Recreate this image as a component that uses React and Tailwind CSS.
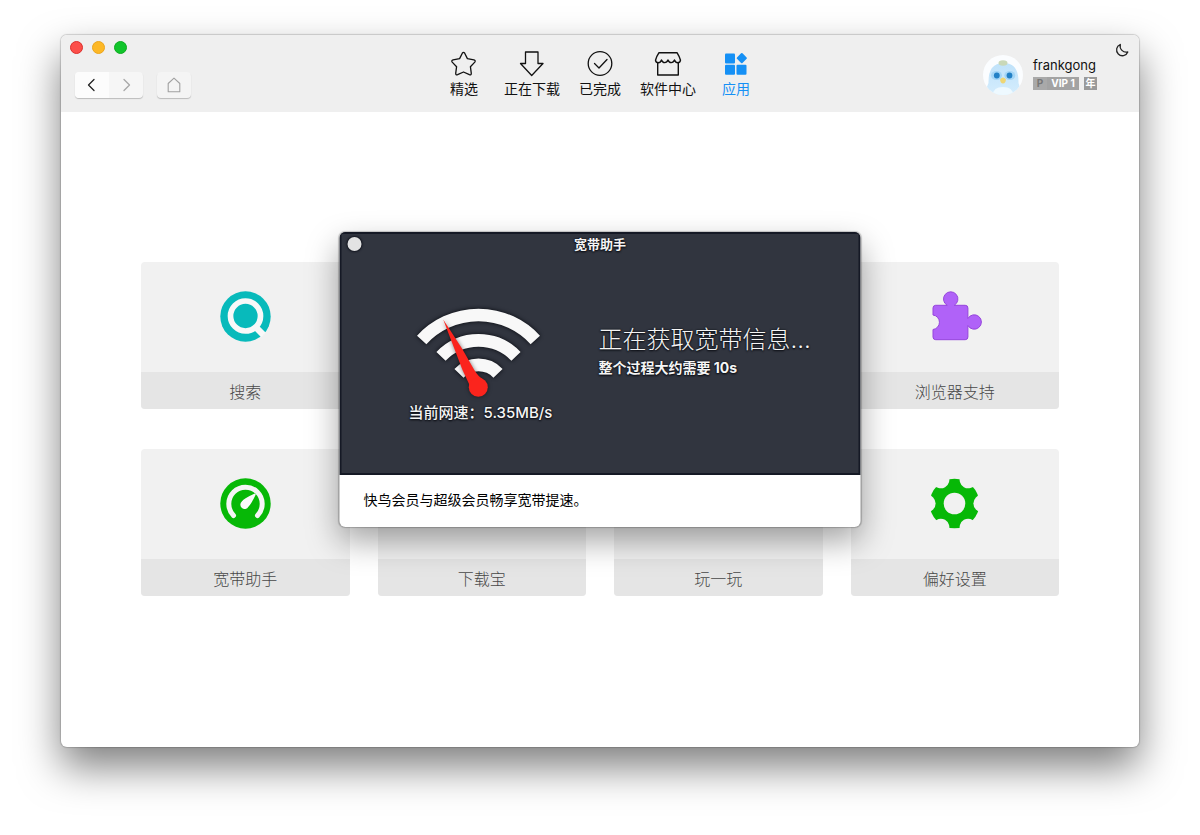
import React from "react";

const line = { fill: "none", stroke: "currentColor", strokeWidth: 1.3, strokeLinejoin: "round", strokeLinecap: "round" };

function StarIcon() {
  return (
    <svg viewBox="0 0 28 28" className="size-7" {...line}>
      <path d="M12.300 3.200q1.200-1.800 2.400 0l2.700 5.400 6.500 1.300q2 .6.900 2.200l-4.400 4.600.9 6.600q0 2-1.900 1.400L13.500 22l-5.900 2.700q-1.900.600-1.900-1.400l.9-6.600-4.400-4.600q-1.100-1.600.9-2.200l6.500-1.300z" />
    </svg>
  );
}

function DownloadIcon() {
  return (
    <svg viewBox="0 0 28 28" className="size-7" {...line}>
      <path d="M7.500 2h12.500v11.500h5L13.700 25.500 2.500 13.500h5z" />
    </svg>
  );
}

function DoneIcon() {
  return (
    <svg viewBox="0 0 28 28" className="size-7" {...line}>
      <circle cx="14" cy="13.500" r="11.800" />
      <path d="M8.500 13.500l4.500 4.500 8-8.500" />
    </svg>
  );
}

function StoreIcon() {
  return (
    <svg viewBox="0 0 28 28" className="size-7" {...line} strokeWidth="1.4">
      <path d="M5 2.700h18q2.500 4 3.500 7.500-.5 2.600-2.700 2.600T20.500 10q-1 2.600-3.300 2.600T14 10q-1 2.600-3.300 2.600T7.500 10q-1 2.800-3.300 2.800T1.500 10.200Q2.500 6.500 5 2.700z" />
      <path d="M3.700 13v12h20.600V13" />
    </svg>
  );
}

function AppsIcon() {
  return (
    <svg viewBox="0 0 28 28" className="size-7" fill="currentColor">
      <rect x="3" y="3.500" width="10" height="10" rx="1" />
      <rect x="3" y="14.700" width="10" height="10" rx="1" />
      <rect x="14.500" y="14.700" width="10" height="10" rx="1" />
      <rect x="15.900" y="4.200" width="7.800" height="7.800" rx="1" transform="rotate(45 19.800 8.100)" />
    </svg>
  );
}

function SearchIcon() {
  return (
    <svg viewBox="0 0 51 51" className="size-[51px]">
      <circle cx="25.500" cy="25.500" r="25.200" fill="#08babb" />
      <circle cx="25.500" cy="25" r="15" fill="none" stroke="#f8f8f8" strokeWidth="5.700" />
      <path d="M35.500 36l8 8" stroke="#f8f8f8" strokeWidth="6.500" />
    </svg>
  );
}

function GaugeIcon() {
  return (
    <svg viewBox="0 0 51 51" className="size-[51px]">
      <circle cx="25.500" cy="25.500" r="25.200" fill="#07b807" />
      <path d="M13.500 37.500a16.700 16.700 0 1 1 24 0" fill="none" stroke="#f5f5f5" strokeWidth="5" strokeLinecap="round" />
      <path d="M21.800 23.500Q24 20.500 34.800 15.600l1 1Q31 26.500 28.400 28.800a4.300 4.300 0 1 1-6.600-5.300z" fill="#fafafa" />
    </svg>
  );
}

function PuzzleIcon() {
  return (
    <svg viewBox="0 0 51 51" className="size-[51px] overflow-visible">
      <path
        d="M6.500 14.300h11.700a7.200 7.200 0 1 1 7 0h11a2.700 2.700 0 0 1 2.700 2.700v10.500a7.200 7.200 0 1 1 0 7V46a2.700 2.700 0 0 1-2.700 2.700H6.700A2.700 2.700 0 0 1 4 46v-7.500a7.300 7.300 0 0 0 0-14.500v-7A2.700 2.700 0 0 1 6.500 14.300z"
        fill="#b062f8"
        stroke="#9544dc"
        strokeWidth="1"
      />
    </svg>
  );
}

const notches = [0, 60, 120, 180, 240, 300];

function GearIcon() {
  return (
    <svg viewBox="0 0 51 51" className="size-[51px]">
      <mask id="gear">
        <circle cx="25.500" cy="25.500" r="24.800" fill="white" />
        <circle cx="25.500" cy="25.500" r="10.800" fill="black" />
        {notches.map((a) => (
          <circle key={a} cx="53" cy="25.500" r="8.600" fill="black" transform={`rotate(${a} 25.500 25.500)`} />
        ))}
      </mask>
      <rect width="51" height="51" fill="#07b807" mask="url(#gear)" />
    </svg>
  );
}

function SpeedIcon() {
  return (
    <svg viewBox="-2 0 136 100" className="h-[100px] w-[136px] overflow-visible">
      <path
        className="drop-shadow-[0_0_2px_#05070d]"
        d="M11.200 40A77 77 0 0 1 124.800 40M30.500 56.300a52 52 0 0 1 75 0M48.500 73.300a27 27 0 0 1 39 0"
        fill="none"
        strokeWidth="12.700"
        stroke="#f8f8f8"
      />
      <g fill="#fb241d" className="drop-shadow-[0_0_2px_rgba(0,0,0,0.5)]">
        <path d="M32.700 19.500L51.500 48.500 63.500 69.500Q67.500 76.500 73 79.500L59.500 86 52 70z" />
        <circle cx="67.800" cy="87.300" r="9.500" />
      </g>
    </svg>
  );
}

function Avatar() {
  return (
    <svg viewBox="0 0 40 40" className="size-10" role="img" aria-label="frankgong">
      <defs>
        <clipPath id="face"><circle cx="20" cy="20" r="20" /></clipPath>
        <linearGradient id="bird" x2="0" y2="1">
          <stop stopColor="#bfe2fa" />
          <stop offset="1" stopColor="#d5edfd" />
        </linearGradient>
      </defs>
      <g clipPath="url(#face)">
        <rect width="40" height="40" fill="#fbfdff" />
        <path d="M5 40Q2 35 5.500 28 5 8 20.500 8T35.500 28q3 7 0 12z" fill="url(#bird)" />
        <path d="M10 40q0-8 10-8t10 8z" fill="#eef9ff" />
        <ellipse cx="20" cy="8" rx="4.500" ry="2.800" fill="#c9d8b8" />
        <ellipse cx="13.500" cy="20.500" rx="5.500" ry="4.500" fill="#a5d6f6" />
        <ellipse cx="26.800" cy="20.500" rx="5.500" ry="4.500" fill="#a5d6f6" />
        <circle cx="13.800" cy="20.500" r="2.900" fill="#2381c6" />
        <circle cx="26.500" cy="20.500" r="2.900" fill="#2381c6" />
        <path d="M17 24.500q3-4 6 0-.5 4-3 4t-3-4z" fill="#eed675" />
      </g>
    </svg>
  );
}

const tabs = [
  { label: "精选", Icon: StarIcon },
  { label: "正在下载", Icon: DownloadIcon },
  { label: "已完成", Icon: DoneIcon },
  { label: "软件中心", Icon: StoreIcon },
  { label: "应用", Icon: AppsIcon, active: true },
];

const cards = [
  { label: "搜索", Icon: SearchIcon, place: "col-start-1" },
  { label: "浏览器支持", Icon: PuzzleIcon, place: "col-start-4" },
  { label: "宽带助手", Icon: GaugeIcon, place: "col-start-1" },
  { label: "下载宝", place: "col-start-2" },
  { label: "玩一玩", place: "col-start-3" },
  { label: "偏好设置", Icon: GearIcon, place: "col-start-4" },
];

function Toolbar() {
  const key = "flex h-[26px] items-center justify-center";
  return (
    <header className="grid min-h-[77px] grid-cols-[1fr_auto_1fr] rounded-t-md bg-[#efefef]">
      <div className="flex flex-col gap-[18px] pt-1.5">
        <div className="flex gap-[9px] pl-[9px]">
          <button aria-label="Close" className="size-[13px] rounded-full border border-[#dc2f2c] bg-[#fc4f4a]" />
          <button aria-label="Minimize" className="size-[13px] rounded-full border border-[#eba51d] bg-[#fdb826]" />
          <button aria-label="Zoom" className="size-[13px] rounded-full border border-[#0eab20] bg-[#11c52b]" />
        </div>
        <div className="flex gap-3.5 pl-3.5">
          <div className="flex overflow-hidden rounded bg-[#f6f6f6] shadow-[0_1px_1px_rgba(0,0,0,0.22)]">
            <button aria-label="Back" className={`${key} w-[34px] bg-[#fcfcfc] text-[#222]`}>
              <svg viewBox="0 0 14 14" className="size-3.5" {...line}><path d="M9 1.500L3.500 7 9 12.500" /></svg>
            </button>
            <button aria-label="Forward" className={`${key} w-[34px] text-[#a8a8a8]`}>
              <svg viewBox="0 0 14 14" className="size-3.5" {...line}><path d="M5 1.500L10.500 7 5 12.500" /></svg>
            </button>
          </div>
          <button aria-label="Home" className={`${key} w-[34px] rounded bg-[#f4f4f4] text-[#a0a0a0] shadow-[0_1px_1px_rgba(0,0,0,0.22)]`}>
            <svg viewBox="0 0 16 16" className="size-4" {...line} strokeWidth="1.1"><path d="M2.200 6.500L8 1.200l5.800 5.300v8.300H2.200z" /></svg>
          </button>
        </div>
      </div>
      <nav className="flex pt-[15px]">
        {tabs.map(({ label, Icon, active }) => (
          <button key={label} className={`flex w-[68px] flex-col items-center gap-px text-sm leading-5 ${active ? "text-[#1590f5]" : "text-[#111]"}`}>
            <Icon />
            <span>{label}</span>
          </button>
        ))}
      </nav>
      <div className="flex items-start justify-end pt-2 pr-2.5">
        <div className="flex gap-2.5 pt-3">
          <Avatar />
          <div className="flex flex-col gap-0.5">
            <span className="text-[13px] leading-5 text-[#111]">frankgong</span>
            <div className="flex gap-[5px] text-[10px] leading-[13px] font-bold text-white">
              <span className="flex bg-[#a3a3a3]">
                <span className="w-3.5 bg-[#a9a9a9] text-center text-[#777]">P</span>
                <span className="w-8 text-center">VIP 1</span>
              </span>
              <span className="w-[13px] bg-[#9a9a9a] text-center">年</span>
            </div>
          </div>
        </div>
        <button aria-label="Dark mode" className="ml-[18px] text-[#222]">
          <svg viewBox="0 0 14 14" className="size-3.5" {...line}><path d="M5.300 1.500A5.800 5.800 0 1 0 12.800 9 6.200 6.200 0 0 1 5.300 1.500z" /></svg>
        </button>
      </div>
    </header>
  );
}

function Card({ label, Icon, place }) {
  return (
    <button className={`${place} overflow-hidden rounded bg-[#f1f1f1] text-base text-[#484848]`}>
      <span className="flex h-[110px] items-center justify-center">{Icon && <Icon />}</span>
      <span className="flex h-[37px] items-center justify-center bg-[#e5e5e5] pt-1 font-light">{label}</span>
    </button>
  );
}

function SpeedDialog() {
  return (
    <section
      role="dialog"
      aria-labelledby="dialog-title"
      className="absolute top-[197px] left-1/2 w-[521px] -translate-x-1/2 overflow-hidden rounded-md bg-white shadow-[0_0_1px_1px_rgba(0,0,0,0.2),0_14px_32px_rgba(0,0,0,0.36)]"
    >
      <div className="flex min-h-[243px] flex-col border-2 border-[#151925] bg-[#31353f] text-[#f5f5f5] [text-shadow:0_0_2px_#080a10,0_1px_2px_#080a10]">
        <div className="grid grid-cols-[1fr_auto_1fr] items-center px-1.5">
          <button aria-label="Close dialog" className="size-3.5 rounded-full bg-[#e3e3e3] shadow-[0_0_2px_1px_#12151e]" />
          <h2 id="dialog-title" className="text-[13px] leading-5 font-bold">宽带助手</h2>
        </div>
        <div className="flex pt-[46px] pl-[67px]">
          <div className="w-[154px]">
            <SpeedIcon />
            <p className="pt-px text-[15px] leading-6 font-medium whitespace-nowrap">当前网速：5.35MB/s</p>
          </div>
          <div className="pt-6 pl-9">
            <p className="text-2xl leading-8 font-light">正在获取宽带信息...</p>
            <p className="text-sm leading-6 font-bold">整个过程大约需要 10s</p>
          </div>
        </div>
      </div>
      <p className="px-6 pt-[15px] pb-[17px] text-sm leading-5 text-black">快鸟会员与超级会员畅享宽带提速。</p>
    </section>
  );
}

export default function App() {
  return (
    <div className="flex min-h-screen flex-col bg-white px-[61px] pt-[35px] pb-[88px] font-['Inter','Noto_Sans_CJK_SC',sans-serif]">
      <div className="relative flex grow flex-col rounded-md bg-white shadow-[0_0_1px_1px_rgba(0,0,0,0.16),0_20px_40px_rgba(0,0,0,0.5)]">
        <Toolbar />
        <main className="flex grow flex-col justify-center px-20 pb-0.5">
          <div className="grid grid-cols-4 gap-x-7 gap-y-10">
            {cards.map((card) => (
              <Card key={card.label} {...card} />
            ))}
          </div>
        </main>
        <SpeedDialog />
      </div>
    </div>
  );
}
